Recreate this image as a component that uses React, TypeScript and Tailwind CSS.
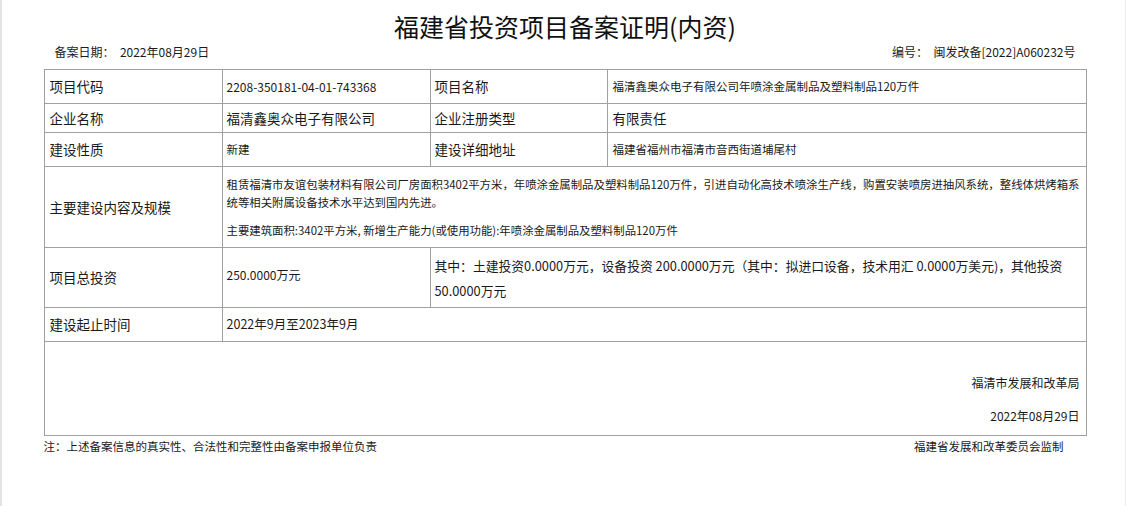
const font = { fontFamily: '"Noto Sans CJK SC", "Noto Sans", sans-serif' };

const cell = "border border-[#a0a0a0] align-middle";

const App = () => {
  return (
    <div
      className="flex w-full h-[506px] bg-white text-[#1a1a1a]"
      style={font}
    >
      <div className="w-[2px] bg-[#e4e4e4]" />
      <div className="flex-1 pl-[42px] pr-[38px]">
        <h1 className="text-center text-[25px] leading-[28px] pt-[12px] text-[#111]">
          福建省投资项目备案证明(内资)
        </h1>
        <div className="flex justify-between px-[11px] mb-[5px] text-[12px] leading-[16px] h-[24px] items-center">
          <span>备案日期：&nbsp;&nbsp;2022年08月29日</span>
          <span>编号：&nbsp;&nbsp;闽发改备[2022]A060232号</span>
        </div>
        <table className="w-[1042px] border-collapse table-fixed">
          <colgroup>
            <col className="w-[178px]" />
            <col className="w-[208px]" />
            <col className="w-[177px]" />
            <col className="w-[479px]" />
          </colgroup>
          <tbody>
            <tr className="h-[34px]">
              <td className={`${cell} pl-[5px] text-[13.5px]`}>项目代码</td>
              <td className={`${cell} pl-[4px] text-[12px]`}>2208-350181-04-01-743368</td>
              <td className={`${cell} pl-[4px] text-[13.5px]`}>项目名称</td>
              <td className={`${cell} pl-[5px] text-[11.5px]`}>
                福清鑫奥众电子有限公司年喷涂金属制品及塑料制品120万件
              </td>
            </tr>
            <tr className="h-[29px]">
              <td className={`${cell} pl-[5px] text-[13.5px]`}>企业名称</td>
              <td className={`${cell} pl-[4px] text-[13.5px]`}>福清鑫奥众电子有限公司</td>
              <td className={`${cell} pl-[4px] text-[13.5px]`}>企业注册类型</td>
              <td className={`${cell} pl-[5px] text-[13.5px]`}>有限责任</td>
            </tr>
            <tr className="h-[34px]">
              <td className={`${cell} pl-[5px] text-[13.5px]`}>建设性质</td>
              <td className={`${cell} pl-[4px] text-[11.5px]`}>新建</td>
              <td className={`${cell} pl-[4px] text-[13.5px]`}>建设详细地址</td>
              <td className={`${cell} pl-[5px] text-[11.5px]`}>福建省福州市福清市音西街道埔尾村</td>
            </tr>
            <tr className="h-[81px]">
              <td className={`${cell} pl-[5px] text-[13.5px]`}>主要建设内容及规模</td>
              <td colSpan={3} className={`${cell} pl-[4px] pr-0 text-[11.4px]`}>
                <p className="leading-[18px]">
                  租赁福清市友谊包装材料有限公司厂房面积3402平方米，年喷涂金属制品及塑料制品120万件，引进自动化高技术喷涂生产线，购置安装喷房进抽风系统，整线体烘烤箱系统等相关附属设备技术水平达到国内先进。
                </p>
                <p className="leading-[18px] mt-[10px]">
                  主要建筑面积:3402平方米, 新增生产能力(或使用功能):年喷涂金属制品及塑料制品120万件
                </p>
              </td>
            </tr>
            <tr className="h-[60px]">
              <td className={`${cell} pl-[5px] text-[13.5px]`}>项目总投资</td>
              <td className={`${cell} pl-[4px] pb-[6px] text-[12px]`}>250.0000万元</td>
              <td colSpan={2} className={`${cell} pl-[4px] pr-[14px] text-[12.8px] leading-[25px]`}>
                其中：土建投资0.0000万元，设备投资 200.0000万元（其中：拟进口设备，技术用汇 0.0000万美元)，其他投资50.0000万元
              </td>
            </tr>
            <tr className="h-[34px]">
              <td className={`${cell} pl-[5px] text-[13.5px]`}>建设起止时间</td>
              <td colSpan={3} className={`${cell} pl-[4px] text-[12.5px]`}>
                2022年9月至2023年9月
              </td>
            </tr>
            <tr className="h-[94px]">
              <td colSpan={4} className={`${cell} align-top pr-[6px] text-[12px] leading-[18px]`}>
                <div className="flex flex-col items-end pt-[32px] gap-[15px]">
                  <span>福清市发展和改革局</span>
                  <span>2022年08月29日</span>
                </div>
              </td>
            </tr>
          </tbody>
        </table>
        <div className="flex justify-between pr-[23px] mt-[2px] text-[11.5px] leading-[16px]">
          <span>注：上述备案信息的真实性、合法性和完整性由备案申报单位负责</span>
          <span>福建省发展和改革委员会监制</span>
        </div>
      </div>
      <div className="w-[2px] bg-[#ececec]" />
    </div>
  );
};

export default App;
